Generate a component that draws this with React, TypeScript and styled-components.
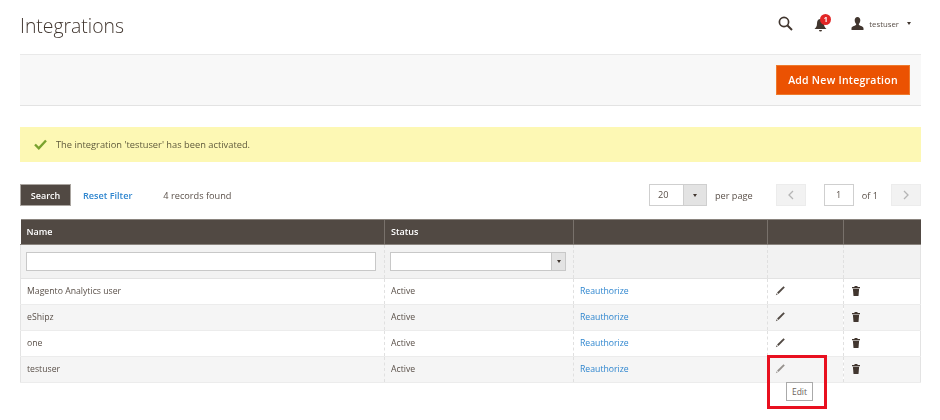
import styled, { createGlobalStyle } from "styled-components";

const GlobalStyle = createGlobalStyle`
  html, body {
    margin: 0;
    padding: 0;
    background: #fff;
  }
  body {
    font-family: "Open Sans", "Liberation Sans", sans-serif;
    color: #41362f;
  }
`;

const Page = styled.div`
  width: 940px;
  height: 420px;
  box-sizing: border-box;
  padding: 0 19px 0 20px;
  overflow: hidden;
  filter: blur(0.5px);
`;

const TopRow = styled.header`
  height: 54px;
  display: flex;
  align-items: center;
  justify-content: space-between;
`;

const Title = styled.h1`
  margin: 0 0 3px;
  font-size: 19.4px;
  font-weight: 300;
  color: #41362f;
`;

const TopActions = styled.div`
  display: flex;
  align-items: center;
  margin: 0 10px 7px 0;
`;

const BellWrap = styled.div`
  position: relative;
  width: 16px;
  height: 16px;
  margin: 0 21px 0 21px;
`;

const Badge = styled.span`
  position: absolute;
  top: -2px;
  left: 6px;
  width: 11px;
  height: 11px;
  border-radius: 50%;
  background: #e22626;
  color: #fff;
  font-size: 7px;
  font-weight: 700;
  line-height: 11px;
  text-align: center;
`;

const UserName = styled.span`
  margin: 0 8px 0 5px;
  font-size: 7.8px;
  color: #5a5049;
`;

const Caret = styled.span`
  width: 0;
  height: 0;
  border-left: 2.5px solid transparent;
  border-right: 2.5px solid transparent;
  border-top: 3px solid #41362f;
`;

const ActionBar = styled.div`
  height: 52px;
  box-sizing: border-box;
  background: #f8f8f8;
  border-top: 1px solid #e9e9e9;
  border-bottom: 1px solid #e3e3e3;
  display: flex;
  align-items: center;
  justify-content: flex-end;
  padding-right: 11px;
`;

const PrimaryButton = styled.button`
  width: 134px;
  height: 30px;
  padding: 0;
  border: 1px solid #ee7a2c;
  background: #eb5202;
  color: #fff;
  font-family: inherit;
  font-size: 10.5px;
  font-weight: 600;
  letter-spacing: 0.25px;
`;

const Message = styled.div`
  height: 35px;
  margin-top: 21px;
  background: #fdf8b4;
  display: flex;
  align-items: center;
  padding-left: 14px;
  font-size: 9.3px;
  color: #5f5a3c;
  gap: 9px;
`;

const Toolbar = styled.div`
  height: 22px;
  margin-top: 22px;
  display: flex;
  align-items: center;
  font-size: 9.2px;
`;

const SearchButton = styled.button`
  width: 51px;
  height: 22px;
  padding: 0;
  border: 1px solid #aaa5a0;
  background: #514943;
  color: #fff;
  font-family: inherit;
  font-size: 9px;
  font-weight: 600;
`;

const ResetLink = styled.a`
  margin-left: 12px;
  color: #2f86cf;
  font-weight: 600;
  font-size: 9.1px;
`;

const Records = styled.span`
  margin-left: 31px;
  color: #5a5049;
`;

const Pager = styled.div`
  margin-left: auto;
  display: flex;
  align-items: center;
`;

const PerPage = styled.div`
  width: 58px;
  height: 22px;
  box-sizing: border-box;
  border: 1px solid #cfcfcf;
  display: flex;
  align-items: stretch;
  background: #fff;
`;

const PerPageValue = styled.span`
  flex: 1;
  padding-left: 8px;
  line-height: 20px;
  color: #5a5049;
`;

const DropArrow = styled.span`
  width: 22px;
  background: #e3e3e3;
  border-left: 1px solid #cfcfcf;
  display: flex;
  align-items: center;
  justify-content: center;
`;

const PagerText = styled.span<{ $left: number; $right: number }>`
  margin: 0 ${({ $right }) => $right}px 0 ${({ $left }) => $left}px;
  color: #5a5049;
`;

const PageStep = styled.span`
  width: 30px;
  height: 22px;
  box-sizing: border-box;
  border: 1px solid #ececec;
  background: #f2f2f2;
  display: flex;
  align-items: center;
  justify-content: center;
`;

const PageInput = styled.span`
  width: 30px;
  height: 22px;
  box-sizing: border-box;
  border: 1px solid #cfcfcf;
  margin-left: 18px;
  text-align: center;
  line-height: 20px;
  color: #5a5049;
`;

const Grid = styled.table`
  width: 900px;
  margin-top: 13px;
  border-collapse: collapse;
  table-layout: fixed;
  font-size: 8.7px;
`;

const HeadCell = styled.th`
  height: 22px;
  padding: 0 0 2px 6px;
  background: #514943;
  color: #fff;
  font-size: 9px;
  font-weight: 600;
  text-align: left;
  border-top: 1px solid #8a847e;
  border-bottom: 1px solid #8a847e;
  border-left: 1px solid #78716b;
  &:first-child { border-left: 0; }
`;

const FilterCell = styled.td`
  height: 33px;
  padding: 0 0 0 5px;
  background: #f2f2f2;
  border-left: 1px dashed #e0e0e0;
  border-bottom: 1px solid #e3e3e3;
  &:first-child { border-left: 1px solid #e3e3e3; }
  &:last-child { border-right: 1px solid #e3e3e3; }
`;

const FilterInput = styled.div`
  width: 350px;
  height: 19px;
  box-sizing: border-box;
  background: #fff;
  border: 1px solid #c8c8c8;
`;

const FilterSelect = styled.div`
  width: 176px;
  height: 19px;
  box-sizing: border-box;
  background: #fff;
  border: 1px solid #c8c8c8;
  display: flex;
  justify-content: flex-end;
`;

const FilterArrow = styled.span`
  width: 13px;
  background: #e3e3e3;
  border-left: 1px solid #c8c8c8;
  display: flex;
  align-items: center;
  justify-content: center;
`;

const Row = styled.tr<{ $odd: boolean }>`
  background: ${({ $odd }) => ($odd ? "#f5f5f5" : "#fff")};
`;

const Cell = styled.td`
  height: 23px;
  padding: 0 0 2px 6px;
  color: #5a5049;
  border-left: 1px dashed #e0e0e0;
  border-bottom: 1px solid #ececec;
  &:first-child { border-left: 1px solid #e3e3e3; }
  &:last-child { border-right: 1px solid #e3e3e3; }
`;

const Reauthorize = styled.a`
  color: #2f86cf;
`;

const IconCell = styled(Cell)`
  position: relative;
  padding-left: 7px;
`;

const TrashCell = styled(Cell)`
  padding-left: 8px;
`;

const Highlight = styled.div`
  position: absolute;
  left: -1px;
  top: -2px;
  width: 60px;
  height: 54px;
  box-sizing: border-box;
  border: 3px solid #e8101f;
  z-index: 2;
`;

const Tooltip = styled.div`
  position: absolute;
  left: 16px;
  top: 24px;
  width: 27px;
  height: 19px;
  box-sizing: border-box;
  border: 1px solid #aaa;
  background: #fff;
  color: #6b625c;
  font-size: 8.5px;
  line-height: 17px;
  text-align: center;
`;

const SearchIcon = () => (
  <svg width="15" height="15" viewBox="0 0 15 15" fill="none" stroke="#41362f" strokeWidth="1.7">
    <circle cx="6" cy="6" r="4.6" />
    <path d="M9.5 9.5 14 14" strokeWidth="2" />
  </svg>
);

const BellIcon = () => (
  <svg width="13" height="15" viewBox="0 0 13 15" fill="#41362f" style={{ marginTop: 1 }}>
    <path d="M6.500 1C4 1 3 3 3 5.500 3 8.500 2 9.500 .5 11h12C11 9.500 10 8.500 10 5.500 10 3 9 1 6.500 1Z" />
    <path d="M5 12h3a1.500 1.500 0 0 1-3 0Z" />
  </svg>
);

const UserIcon = () => (
  <svg width="13" height="13" viewBox="0 0 13 13" fill="#41362f">
    <path d="M6.500 0C4.700 0 3.700 1.300 3.700 3.200c0 1.500.6 2.900 1.400 3.600v1.100C3.500 8.800.5 9.300.5 11.200V13h12v-1.800c0-1.900-3-2.400-4.600-3.300V6.800c.8-.7 1.400-2.100 1.400-3.600C9.300 1.300 8.300 0 6.500 0Z" />
  </svg>
);

const CheckIcon = () => (
  <svg width="13" height="11" viewBox="0 0 13 11" fill="none" stroke="#79a22e" strokeWidth="2.4">
    <path d="M1 5.500 4.800 9.300 12 1.500" />
  </svg>
);

const Chevron = ({ left }: { left?: boolean }) => (
  <svg width="6" height="10" viewBox="0 0 6 10" fill="none" stroke="#b5b5b5" strokeWidth="1.3">
    <path d={left ? "M5 1 1 5l4 4" : "M1 1l4 4-4 4"} />
  </svg>
);

const PencilIcon = ({ faded }: { faded?: boolean }) => (
  <svg width="11" height="11" viewBox="0 0 11 11" fill={faded ? "#96918d" : "#514943"} style={{ display: "block" }}>
    <path d="M8.500 1.200 9.800 2.500 3.400 8.900 2.100 7.600Z" />
    <path d="M1.700 8.200 2.800 9.300.8 10.200Z" />
  </svg>
);

const TrashIcon = () => (
  <svg width="8" height="10" viewBox="0 0 8 10" fill="#41362f" style={{ display: "block" }}>
    <path d="M2.700 0h2.600l.4.9H8v1.300H0V.9h2.300Z" />
    <path d="M.9 2.800h6.200L6.500 10h-5Z" />
  </svg>
);

const rows = ["Magento Analytics user", "eShipz", "one", "testuser"];

export default function App() {
  return (
    <>
      <GlobalStyle />
      <Page>
        <TopRow>
          <Title>Integrations</Title>
          <TopActions>
            <SearchIcon />
            <BellWrap>
              <BellIcon />
              <Badge>1</Badge>
            </BellWrap>
            <UserIcon />
            <UserName>testuser</UserName>
            <Caret />
          </TopActions>
        </TopRow>
        <ActionBar>
          <PrimaryButton>Add New Integration</PrimaryButton>
        </ActionBar>
        <Message>
          <CheckIcon />
          The integration 'testuser' has been activated.
        </Message>
        <Toolbar>
          <SearchButton>Search</SearchButton>
          <ResetLink>Reset Filter</ResetLink>
          <Records>4 records found</Records>
          <Pager>
            <PerPage>
              <PerPageValue>20</PerPageValue>
              <DropArrow>
                <Caret />
              </DropArrow>
            </PerPage>
            <PagerText $left={8} $right={23}>per page</PagerText>
            <PageStep>
              <Chevron left />
            </PageStep>
            <PageInput>1</PageInput>
            <PagerText $left={8} $right={13}>of 1</PagerText>
            <PageStep>
              <Chevron />
            </PageStep>
          </Pager>
        </Toolbar>
        <Grid>
          <colgroup>
            <col width="364" />
            <col width="189" />
            <col width="194" />
            <col width="76" />
            <col width="77" />
          </colgroup>
          <thead>
            <tr>
              <HeadCell>Name</HeadCell>
              <HeadCell>Status</HeadCell>
              <HeadCell />
              <HeadCell />
              <HeadCell />
            </tr>
          </thead>
          <tbody>
            <tr>
              <FilterCell>
                <FilterInput />
              </FilterCell>
              <FilterCell>
                <FilterSelect>
                  <FilterArrow>
                    <Caret />
                  </FilterArrow>
                </FilterSelect>
              </FilterCell>
              <FilterCell />
              <FilterCell />
              <FilterCell />
            </tr>
            {rows.map((name, i) => (
              <Row key={name} $odd={i % 2 === 1}>
                <Cell>{name}</Cell>
                <Cell>Active</Cell>
                <Cell>
                  <Reauthorize>Reauthorize</Reauthorize>
                </Cell>
                <IconCell>
                  <PencilIcon faded={i === 3} />
                  {i === 3 && (
                    <Highlight>
                      <Tooltip>Edit</Tooltip>
                    </Highlight>
                  )}
                </IconCell>
                <TrashCell>
                  <TrashIcon />
                </TrashCell>
              </Row>
            ))}
          </tbody>
        </Grid>
      </Page>
    </>
  );
}
